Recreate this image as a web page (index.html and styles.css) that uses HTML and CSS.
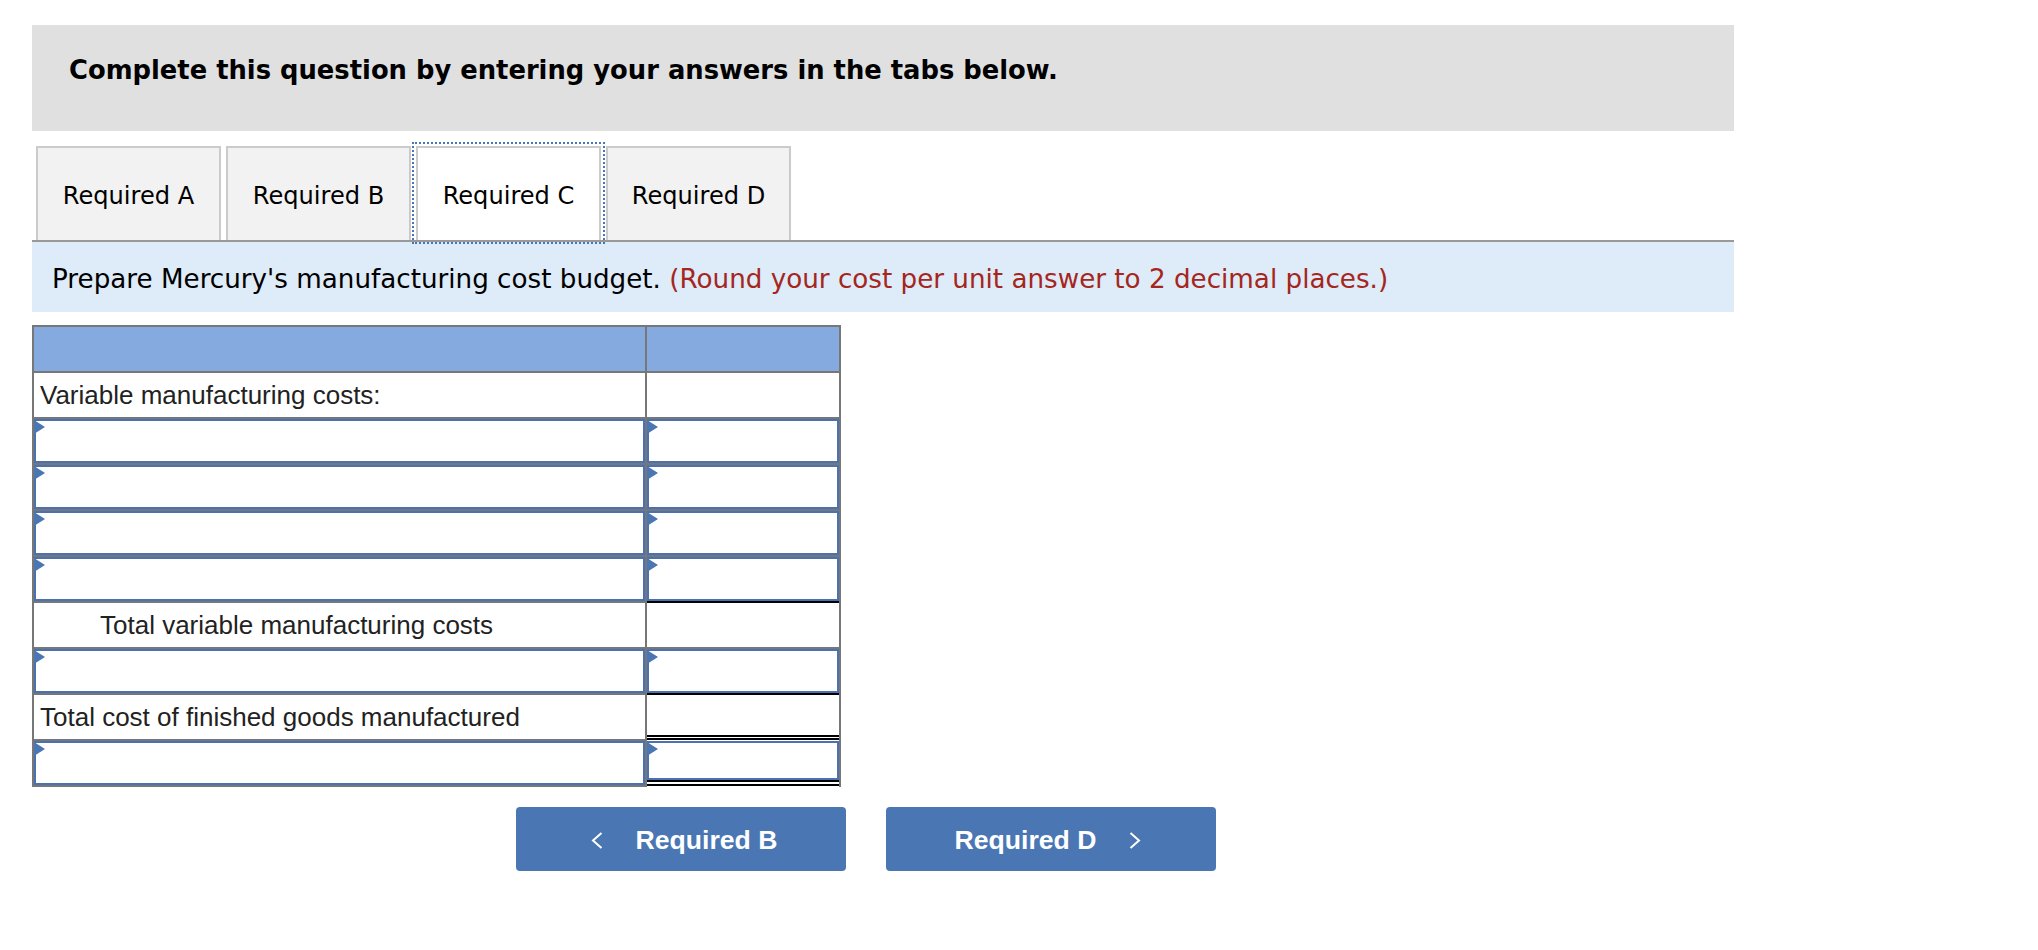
FILE: index.html
```html
<!DOCTYPE html>
<html lang="en">
<head>
<meta charset="utf-8">
<title>Manufacturing cost budget</title>
<link rel="stylesheet" href="styles.css">
</head>
<body>
<div class="page">
  <div class="banner">
    <p class="banner-text">Complete this question by entering your answers in the tabs below.</p>
  </div>

  <div class="tabs">
    <div class="tab">Required A</div>
    <div class="tab">Required B</div>
    <div class="tab active">Required C</div>
    <div class="tab">Required D</div>
  </div>

  <div class="instr">Prepare Mercury's manufacturing cost budget. <span class="note">(Round your cost per unit answer to 2 decimal places.)</span></div>

  <div class="sheet">
    <div class="cell head"></div><div class="cell head"></div>

    <div class="cell label">Variable manufacturing costs:</div><div class="cell"></div>

    <div class="cell"><div class="input"></div></div><div class="cell"><div class="input"></div></div>
    <div class="cell"><div class="input"></div></div><div class="cell"><div class="input"></div></div>
    <div class="cell"><div class="input"></div></div><div class="cell"><div class="input"></div></div>
    <div class="cell"><div class="input"></div></div><div class="cell under"><div class="input"></div></div>

    <div class="cell label indent">Total variable manufacturing costs</div><div class="cell"></div>

    <div class="cell"><div class="input"></div></div><div class="cell under"><div class="input"></div></div>

    <div class="cell label">Total cost of finished goods manufactured</div><div class="cell dbl"></div>

    <div class="cell"><div class="input"></div></div><div class="cell dbl-last"><div class="input short"></div></div>
  </div>

  <div class="nav">
    <button class="btn prev" type="button">
      <svg class="chev" width="12" height="17" viewBox="0 0 12 17"><polyline points="10.5,1 2,8.5 10.5,16" fill="none" stroke="#fff" stroke-width="2"/></svg>
      <span>Required B</span>
    </button>
    <button class="btn next" type="button">
      <span>Required D</span>
      <svg class="chev" width="12" height="17" viewBox="0 0 12 17"><polyline points="1.5,1 10,8.5 1.5,16" fill="none" stroke="#fff" stroke-width="2"/></svg>
    </button>
  </div>
</div>
</body>
</html>
```

FILE: styles.css
```css
html, body {
  margin: 0;
  background: #fff;
}

.page {
  padding: 25px 0 40px 32px;
  width: 1702px;
}

.banner {
  background: #e0e0e0;
  height: 106px;
  box-sizing: border-box;
  padding: 30px 37px 0;
}

.banner-text {
  margin: 0;
  font: bold 25.8px/30px "DejaVu Sans", Verdana, sans-serif;
  color: #000;
  white-space: nowrap;
}

.tabs {
  margin-top: 15px;
  display: flex;
  gap: 5px;
  padding-left: 4px;
  border-bottom: 2px solid #999;
}

.tab {
  width: 185px;
  height: 94px;
  box-sizing: border-box;
  border: 2px solid #cbcbcb;
  border-bottom: 0;
  background: #f2f2f2;
  display: flex;
  align-items: center;
  justify-content: center;
  padding-top: 3px;
  font: 24.1px "DejaVu Sans", Verdana, sans-serif;
  color: #000;
  white-space: nowrap;
}

.tab.active {
  background: #fff;
  outline: 2px dotted #4a76b4;
  outline-offset: 2px;
}

.instr {
  background: #deebf8;
  height: 70px;
  box-sizing: border-box;
  padding: 22px 20px 0;
  font: 26.2px "DejaVu Sans", Verdana, sans-serif;
  color: #000;
  white-space: nowrap;
}

.note {
  color: #a4261d;
}

.sheet {
  margin-top: 13px;
  display: grid;
  grid-template-columns: 611px 192px;
  grid-auto-rows: 44px;
  gap: 2px;
  border: 2px solid #777;
  background: #777;
  width: max-content;
}

.cell {
  background: #fff;
  position: relative;
}

.cell.head {
  background: #84aadf;
}

.label {
  display: flex;
  align-items: center;
  padding-left: 6px;
  font: 26px "Liberation Sans", Arial, sans-serif;
  color: #222;
  white-space: nowrap;
}

.label.indent {
  padding-left: 66px;
}

.input {
  box-sizing: border-box;
  height: 100%;
  border: 2px solid #4a72b3;
  position: relative;
  background: #fff;
}

.input::before {
  content: "";
  position: absolute;
  left: -2px;
  top: -1px;
  border-style: solid;
  border-width: 7px 0 7px 11px;
  border-color: transparent transparent transparent #4a76b4;
}

.input.short {
  height: 39px;
}

.under {
  box-shadow: 0 2px 0 #000;
}

.dbl {
  box-shadow: inset 0 -1px 0 #000, inset 0 -2px 0 #fff, inset 0 -4px 0 #000, 0 1px 0 #000, 0 2px 0 #fff;
}

.dbl-last {
  box-shadow: inset 0 -1px 0 #000, inset 0 -3px 0 #fff, inset 0 -5px 0 #000, 0 1px 0 #000, 0 2px 0 #fff;
}

.nav {
  margin-top: 20px;
  padding-left: 484px;
  display: flex;
  gap: 40px;
}

.btn {
  width: 330px;
  height: 64px;
  box-sizing: border-box;
  padding: 2px 0 0;
  border: 0;
  border-radius: 4px;
  background: #4a76b4;
  color: #fff;
  font: bold 26.6px "Liberation Sans", Arial, sans-serif;
  display: flex;
  align-items: center;
  justify-content: center;
  gap: 33px;
}

.btn.prev {
  padding-left: 6px;
}

.btn.next {
  padding-right: 6px;
}

.chev {
  display: block;
}
```
